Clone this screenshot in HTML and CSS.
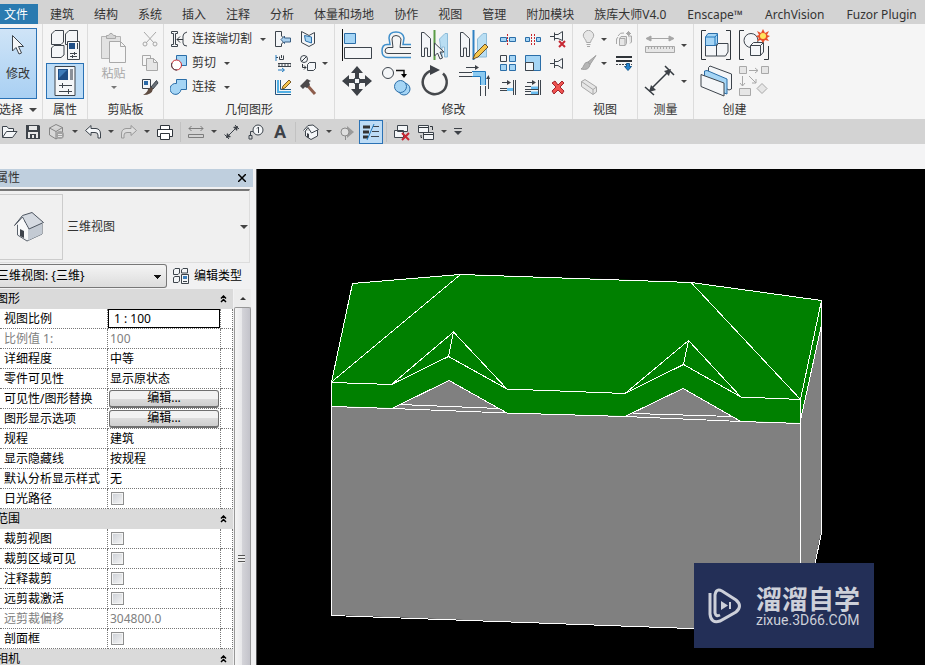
FILE: index.html
```html
<!DOCTYPE html>
<html lang="zh-CN">
<head>
<meta charset="utf-8">
<title>三维视图</title>
<link rel="stylesheet" href="styles.css">
</head>
<body>
<nav class="tabs">
  <a class="tab tab-file" href="#">文件</a>
  <a class="tab" href="#">建筑</a>
  <a class="tab" href="#">结构</a>
  <a class="tab" href="#">系统</a>
  <a class="tab" href="#">插入</a>
  <a class="tab" href="#">注释</a>
  <a class="tab" href="#">分析</a>
  <a class="tab" href="#">体量和场地</a>
  <a class="tab" href="#">协作</a>
  <a class="tab" href="#">视图</a>
  <a class="tab" href="#">管理</a>
  <a class="tab" href="#">附加模块</a>
  <a class="tab" href="#">族库大师V4.0</a>
  <a class="tab tab-addin" href="#">Enscape™</a>
  <a class="tab tab-addin" href="#">ArchVision</a>
  <a class="tab tab-addin" href="#">Fuzor Plugin</a>
</nav>

<div class="ribbon">
  <section class="panel panel-select">
    <div class="panel-body">
      <button class="modify">
        <svg width="14" height="22" viewBox="0 0 14 22"><path class="wh" d="M1.500 1.500V17L5 13.500L8 20L10.500 19L7.500 12.500H12.500Z"/></svg>
        <span>修改</span>
      </button>
    </div>
    <h2 class="panel-title">选择 <i class="caret caret-big"></i></h2>
  </section>

  <section class="panel panel-props">
    <div class="panel-body stack">
      <button class="big" aria-label="类型属性">
        <svg width="32" height="32" viewBox="0 0 32 32"><path class="wh" d="M2.500 5L6 1.500H14.500V13L12 15.500H2.500ZM16.500 5L20 1.500H28.500V13L26 15.500H16.500ZM2.500 19L5 16.500H15V26L12 28.500H2.500Z"/><path class="wh" d="M18.500 12.500H30.500V30.500H18.500Z"/><path fill="#1f4e86" d="M20 14H26V20H20Z"/><path class="ln" d="M28.500 14V20M21 24.500H28M21 27.500H28M25.500 23V26M23.500 26V29"/></svg>
      </button>
      <button class="big selected" aria-label="属性">
        <svg width="24" height="32" viewBox="0 0 24 32"><path class="wh" d="M2 1.500H22V30.500H2Z"/><path fill="#1f4e86" d="M5 4H15V15H5Z"/><path fill="#3f7cb9" d="M6 5H14L6 13Z"/><path fill="#8b9199" d="M17 4H20V15H17Z"/><path class="ln" d="M6 20.500H19M6 26.500H19M9.500 18V23M15.500 24V29"/></svg>
      </button>
    </div>
    <h2 class="panel-title">属性</h2>
  </section>

  <section class="panel panel-clip">
    <div class="panel-body split">
      <button class="paste" disabled>
        <svg width="28" height="32" viewBox="0 0 28 32"><path fill="#e2e2e2" stroke="#b4b4b4" d="M1.500 4.500H20.500V26.500H1.500Z"/><path fill="#d4d4d4" stroke="#a9a9a9" d="M6.500 6.500V3.500H8.500Q11 -1 13.500 3.500H15.500V6.500Z"/><path fill="#f6f6f6" stroke="#a9a9a9" d="M9.500 9.500H20.500L25.500 14.500V30.500H9.500ZM20.500 9.500V14.500H25.500"/></svg>
        <span>粘贴</span>
        <i class="caret"></i>
      </button>
      <div class="stack">
        <button class="small" aria-label="剪切"><svg width="18" height="18" viewBox="0 0 18 18"><path class="gy" d="M3 2L13 13M15 2L5 13"/><circle class="gy" cx="4" cy="14" r="2"/><circle class="gy" cx="14" cy="14" r="2"/></svg></button>
        <button class="small" aria-label="复制"><svg width="18" height="18" viewBox="0 0 18 18"><path class="gy" d="M5 11.500H1.500V1.500H9.500V4"/><path class="gyf" d="M5.500 4.500H12.500L16.500 8.500V16.500H5.500ZM12.500 4.500V8.500H16.500"/></svg></button>
        <button class="small" aria-label="匹配类型"><svg width="18" height="18" viewBox="0 0 18 18"><path class="wh" d="M1.500 1.500H9.500V10.500H1.500Z"/><path fill="#2a69a6" d="M3 3H7V7H3Z"/><path fill="#6b7178" stroke="#3d444c" d="M15.500 2.500L10 9L12 11L17 5Z"/><path fill="#604d42" d="M10 9L12 11Q11 17 2 17Q7 14 7 11Z"/></svg></button>
      </div>
    </div>
    <h2 class="panel-title">剪贴板</h2>
  </section>

  <section class="panel panel-geom">
    <div class="panel-body geom-grid">
      <button class="labelled"><svg width="18" height="18" viewBox="0 0 18 18"><path class="wh" d="M1.500 1.500H7.500V3.500H5.500V14.500H7.500V16.500H1.500V14.500H3.500V3.500H1.500Z"/><path class="lk" d="M7 9.500H13M10 6.500L7 9.500L10 12.500"/><path class="ln" d="M17 2Q13 3 13 6V13Q13 16 17 16"/></svg><span>连接端切割</span><i class="caret"></i></button>
      <button class="small" aria-label="墙连接"><svg width="18" height="18" viewBox="0 0 18 18"><path class="wh" d="M1.500 1.500H7.500V6L9.500 8M9.500 12L7.500 14V16.500H1.500V1.500"/><path fill="#a9d0ef" stroke="#3b5f83" d="M7 9.500L10.500 6V8H16.500V12H10.500V13.500Z"/></svg></button>
      <button class="small" aria-label="拆分面"><svg width="18" height="18" viewBox="0 0 18 18"><path class="wh" d="M2.500 1.500L10 5.500L15.500 2.500V13.500L10 16.500L2.500 12.500Z"/><path class="bl" d="M5.500 5.500L12.500 7V13L6.500 11Z"/></svg></button>
      <button class="labelled"><svg width="18" height="18" viewBox="0 0 18 18"><path class="bl" d="M6.500 1.500H16.500V11.500H6.500Z"/><circle cx="6.500" cy="11" r="5" fill="#fff" stroke="#c6282f"/><path class="ln" d="M2 9A5 5 0 0 0 7 16"/></svg><span>剪切</span><i class="caret"></i></button>
      <button class="small" aria-label="梁连接"><svg width="18" height="18" viewBox="0 0 18 18"><path class="ln" d="M5.500 2.500V5.500H9.500V1.500M7.500 1V4M2 3.500H4M4 9.500H17M4 12.500H17"/><path class="ln" stroke-dasharray="2 1" d="M4 11H17"/><path class="bs" d="M4 16H10M8 14L10.500 16L8 18M2 1V7"/></svg></button>
      <div class="pair"><button class="small" aria-label="填充"><svg width="18" height="18" viewBox="0 0 18 18"><circle class="wh" cx="5" cy="5" r="3.500"/><path class="lk" d="M2.500 7.500L7.500 2.500M3.500 10V13.500H7M5 11.500L7 13.500L5 15.500"/><path class="wh" d="M8.500 10.500L10.500 8.500H16.500V14.500L14.500 16.500H8.500Z"/></svg></button><i class="caret"></i></div>
      <button class="labelled"><svg width="18" height="18" viewBox="0 0 18 18"><path class="bl" d="M6.500 1.500H16.500V11.500H11A5.500 5.500 0 1 1 6.500 5.500Z"/></svg><span>连接</span><i class="caret"></i></button>
      <button class="small" aria-label="编辑"><svg width="18" height="18" viewBox="0 0 18 18"><path d="M1.500 2V16.500H17M6.500 2V11.500H17" fill="none" stroke="#24527c"/><path d="M4 2V14H17" fill="none" stroke="#52b0e5" stroke-width="2"/><path fill="#f5c34b" stroke="#7b5a22" d="M8 11L9 8L15 2L17 4L11 10Z"/></svg></button>
      <button class="small" aria-label="拆除"><svg width="18" height="18" viewBox="0 0 18 18"><path d="M8 7L16 16" stroke="#8d5d4c" stroke-width="3"/><path fill="#4d4a4c" d="M1 8L8 1L12 3L10 4L11 7L8 10L6 9L4 11Z"/></svg></button>
    </div>
    <h2 class="panel-title">几何图形</h2>
  </section>

  <section class="panel panel-modify">
    <div class="panel-body split">
      <div class="big-grid">
        <button class="big" aria-label="对齐"><svg width="32" height="32" viewBox="0 0 32 32"><path d="M1.500 0V32" stroke="#111"/><path class="bl" d="M3.500 4.500H14.500V14.500H3.500Z"/><path class="wh" d="M3.500 18.500H30.500V29.500H3.500Z"/></svg></button>
        <button class="big" aria-label="偏移"><svg width="32" height="32" viewBox="0 0 32 32"><path d="M31 15.500H23L24 9Q23 3 16 3Q9 3 9 9L10 15.500H7Q2 15.500 2 22Q2 28.500 8 28.500H31" fill="none" stroke="#3f8fcb" stroke-width="1.500"/><path class="ln" d="M31 18.500H20L21 10Q20 6.500 16 6.500Q12 6.500 12 10L13 18.500H8Q5 19 5 22Q5 24.500 8 24.500H31"/></svg></button>
        <button class="big" aria-label="镜像 - 拾取轴"><svg width="32" height="32" viewBox="0 0 32 32"><path class="wh" d="M2.500 27.500V3.500H5L11.500 9.500V27.500H8.500V19H5.500V27.500Z"/><path fill="#b9def3" stroke="#8dbbd8" d="M20.500 10L26 4.500H28.500V28H25.500V18H23V28Z"/><path d="M15.500 1V31" stroke="#5b9d45" stroke-width="2"/><path class="wh" d="M15.500 14V27L18.500 24L21 30L23.500 29L21 23H25Z"/></svg></button>
        <button class="big" aria-label="镜像 - 绘制轴"><svg width="32" height="32" viewBox="0 0 32 32"><path class="wh" d="M2.500 27.500V3.500H5L11.500 9.500V27.500H8.500V19H5.500V27.500Z"/><path fill="#b9def3" stroke="#8dbbd8" d="M19.500 10L25 4.500H28.500V28H19.500Z"/><path d="M15.500 1V31" stroke="#2f80c3" stroke-width="2"/><path fill="#f6c64c" stroke="#6c5028" d="M15 30L17 25L27 15L30 18L20 28Z"/></svg></button>
        <button class="big" aria-label="移动"><svg width="32" height="32" viewBox="0 0 32 32"><path class="dk" d="M16 1L22 8H18V13H14V8H10ZM16 31L22 24H18V19H14V24H10ZM1 16L8 10V14H13V18H8V22ZM31 16L24 10V14H19V18H24V22Z"/><path class="wh" d="M13.500 13.500H18.500V18.500H13.500Z"/></svg></button>
        <button class="big" aria-label="复制"><svg width="32" height="32" viewBox="0 0 32 32"><circle class="wh" cx="8" cy="8" r="5.500"/><path d="M16 5.500H24V11" fill="none" stroke="#111" stroke-width="1.500"/><path d="M21 9H27L24 13Z"/><circle class="bl" cx="24" cy="24" r="6"/><circle class="bl" cx="20.500" cy="21.500" r="6"/></svg></button>
        <button class="big" aria-label="旋转"><svg width="32" height="32" viewBox="0 0 32 32"><path d="M24 8.500A12 12 0 1 1 13 5.500" fill="none" stroke="#45484c" stroke-width="2.500"/><path class="dk" d="M11 0L21 5L11 10Z"/></svg></button>
        <button class="big" aria-label="修剪/延伸为角"><svg width="32" height="32" viewBox="0 0 32 32"><path d="M15 9H25V20" fill="none" stroke="#8ccaf0" stroke-width="4"/><path class="bs" d="M14 6.500H27.500V20M14 11.500H22.500V20"/><path class="ln" d="M1 7.500H14M1 11.500H14M22.500 21V31M27.500 21V31M8 2.500H18M30.500 12V24"/><path class="dk" d="M17 0L21 2.500L17 5ZM28 14L30.500 10L32 14Z"/></svg></button>
      </div>
      <div class="small-grid">
        <button class="small" aria-label="拆分图元"><svg width="18" height="18" viewBox="0 0 18 18"><path class="bl" d="M1.500 7.500H7.500V11.500H1.500ZM10.500 7.500H16.500V11.500H10.500Z"/><path class="rd" stroke-dasharray="2 1" d="M8.500 4V16"/></svg></button>
        <button class="small" aria-label="用间隙拆分"><svg width="18" height="18" viewBox="0 0 18 18"><path class="bl" d="M1.500 7.500H5.500V11.500H1.500ZM12.500 7.500H16.500V11.500H12.500Z"/><path class="rd" stroke-dasharray="2 1" d="M7.500 4V16M10.500 4V16"/></svg></button>
        <button class="small" aria-label="解锁"><svg width="18" height="18" viewBox="0 0 18 18"><path class="wh" d="M5.500 2.500V10.500M5.500 4.500H9L13.500 1.500V10.500L9 8.500H5.500"/><path class="ln" d="M1 6.500H5"/><path d="M10 11L16 17M16 11L10 17" stroke="#c62833" stroke-width="2"/></svg></button>
        <button class="small" aria-label="阵列"><svg width="18" height="18" viewBox="0 0 18 18"><path class="wh" d="M1.500 1.500H7.500V7.500H1.500Z"/><path class="bl" d="M10.500 1.500H16.500V7.500H10.500ZM1.500 10.500H7.500V16.500H1.500ZM10.500 10.500H16.500V16.500H10.500Z"/></svg></button>
        <button class="small" aria-label="缩放"><svg width="18" height="18" viewBox="0 0 18 18"><path class="bl" d="M1.500 1.500H16.500V16.500H1.500Z"/><path class="wh" d="M1.500 8.500H9.500V16.500H1.500Z"/></svg></button>
        <button class="small" aria-label="锁定"><svg width="18" height="18" viewBox="0 0 18 18"><path class="wh" d="M5.500 5V14M5.500 7.500H9L13.500 4.500V14.500L9 11.500H5.500"/><path class="ln" d="M1 9.500H5"/></svg></button>
        <button class="small" aria-label="修剪/延伸单个图元"><svg width="18" height="18" viewBox="0 0 18 18"><path d="M8 11.500H14" stroke="#6abdf0" stroke-width="3"/><path class="ln" d="M1 10.500H8M1 12.500H8M14.500 2V17M16.500 2V17M3 4.500H10"/><path class="dk" d="M8 2L12 4.500L8 7Z"/></svg></button>
        <button class="small" aria-label="修剪/延伸多个图元"><svg width="18" height="18" viewBox="0 0 18 18"><path d="M7 10H14M7 15H14" stroke="#6abdf0" stroke-width="3"/><path class="ln" d="M1 8.500H7M1 11.500H14M1 13.500H7M1 16.500H14M14.500 2V17M16.500 2V17M3 4.500H10"/><path class="dk" d="M8 2L12 4.500L8 7Z"/></svg></button>
        <button class="small" aria-label="删除"><svg width="18" height="18" viewBox="0 0 18 18"><path fill="#ef5350" stroke="#a3242c" d="M3 5L6 3L9 7L13 3L15 5L11 9L15 13L13 16L9 12L5 16L3 13L7 9Z"/></svg></button>
      </div>
    </div>
    <h2 class="panel-title">修改</h2>
  </section>

  <section class="panel panel-view">
    <div class="panel-body view-grid">
      <div class="pair"><button class="small" aria-label="隐藏"><svg width="18" height="18" viewBox="0 0 18 18"><path class="gyf" d="M6.500 12.500Q6 10 4.500 8.500A5 5 0 1 1 12.500 8.500Q11 10 10.500 12.500ZM6.500 14.500H10.500M7 16.500H10"/></svg></button><i class="caret"></i></div>
      <button class="small" aria-label="置换"><svg width="18" height="18" viewBox="0 0 18 18"><path class="gyf" d="M4.500 8.500L6 6.500H11.500V13.500L10 15.500H4.500ZM4.500 8.500H10V15.500M13 6H16.500V12L15 13.500M1.500 14V9L3 7"/><path class="gy" d="M3 6Q5 2 9 3M13.500 1V6M11 3.500H16M12 2L15 5M15 2L12 5"/></svg></button>
      <div class="pair"><button class="small" aria-label="替代"><svg width="18" height="18" viewBox="0 0 18 18"><path fill="#b5b5b5" stroke="#a0a0a0" d="M16 1.500L8 8L10 10.500ZM8 8Q5 8 4 11Q3 14 1 15Q9 17 10 10.500Z"/></svg></button><i class="caret"></i></div>
      <button class="small" aria-label="线处理"><svg width="18" height="18" viewBox="0 0 18 18"><path d="M1 3H17M1 7H17" stroke="#2e3338" stroke-width="2"/><path class="ln" stroke-dasharray="2 1" d="M1 10.500H17"/><path fill="#2685cf" stroke="#17598f" d="M11.500 9.500H14.500V12.500H16.500L13 16.500L9.500 12.500H11.500Z"/></svg></button>
      <button class="small" aria-label="剖面框"><svg width="18" height="18" viewBox="0 0 18 18"><path class="gyf" d="M1.500 3.500L5 1.500L16.500 9V14L13 16.500L1.500 8.500ZM1.500 3.500L13 11.500V16.500M13 11.500L16.500 9"/></svg></button>
    </div>
    <h2 class="panel-title">视图</h2>
  </section>

  <section class="panel panel-measure">
    <div class="panel-body stack">
      <div class="pair"><button class="big" aria-label="测量"><svg width="32" height="32" viewBox="0 0 32 32"><path d="M3 9.500H29M7 7V12L2 9.500ZM25 7V12L30 9.500Z" fill="#a6a6a6" stroke="#a6a6a6"/><path class="gyf" d="M1.500 17.500H30.500V23.500H1.500ZM4.500 17V20M7.500 17V20M10.500 17V20M13.500 17V20M16.500 17V20M19.500 17V20M22.500 17V20M25.500 17V20M28.500 17V20"/></svg></button><i class="caret"></i></div>
      <div class="pair"><button class="big" aria-label="对齐尺寸标注"><svg width="32" height="32" viewBox="0 0 32 32"><path d="M6 25L26 5M1 22L10 30M21 1L30 10" stroke="#343a40" stroke-width="1.500"/><path class="dk" d="M5 27L7 20L12 25ZM27 4L20 6L25 11Z"/></svg></button><i class="caret"></i></div>
    </div>
    <h2 class="panel-title">测量</h2>
  </section>

  <section class="panel panel-create">
    <div class="panel-body create-grid">
      <button class="big" aria-label="创建部件"><svg width="32" height="32" viewBox="0 0 32 32"><path class="lk" d="M6 1.500H1.500V30.500H6M26 1.500H30.500V30.500H26"/><path class="wh" d="M5.500 16H16.500V27H5.500ZM16.500 17L18 14.500H28V23L25.500 27H16.500Z"/><path class="bl" d="M5.500 8L8 4.500H17.500V14L15.500 16.500H5.500Z"/><path class="bs" d="M5.500 8H15V16M15 8L17.500 5"/></svg></button>
      <button class="big" aria-label="创建组"><svg width="32" height="32" viewBox="0 0 32 32"><path class="lk" d="M6 1.500H1.500V30.500H6M26 30.500H30.500V17"/><circle class="wh" cx="13" cy="11.500" r="7"/><path class="wh" d="M12.500 16.500L15.500 13.500H25.500V23L22.500 26.500H12.500ZM12.500 16.500H22.500V26.500M22.500 16.500L25.500 13.500"/><path fill="#e8502a" d="M25 0L27 4L31 2L29 6L32 7L29 9L31 12L27 11L25 14L23 11L19 12L21 9L18 7L21 6L19 2L23 4Z"/><circle cx="25" cy="7" r="3" fill="#ffe45e"/></svg></button>
      <button class="big" aria-label="创建平行"><svg width="32" height="32" viewBox="0 0 32 32"><path class="wh" d="M8.500 2.500L10 1L31.500 9V24L29 25L8.500 14Z"/><path class="bl" d="M4.500 10V6L7 5.500L27 14V29L24 28L4.500 18Z"/><path class="wh" d="M1 9.500L24 18V31L1 21.500Z"/></svg></button>
      <button class="big" aria-label="创建相似"><svg width="32" height="32" viewBox="0 0 32 32"><path class="gyf" d="M1.500 1.500H8.500V8.500H1.500ZM23.500 1.500H30.500V8.500H23.500ZM1.500 23.500H12.500V30.500H1.500ZM24 18.500L29 23.500L24 28.500L19 23.500Z"/><path class="gy" d="M11 5.500H20M17 3L20 5.500L17 8M4.500 11V21M2 18L4.500 21L7 18M11 11L18 18M14 18H18V14"/></svg></button>
    </div>
    <h2 class="panel-title">创建</h2>
  </section>
</div>

<div class="quick">
  <button class="q" aria-label="打开"><svg width="18" height="18" viewBox="0 0 18 18"><path class="wh" d="M2.500 14V3.500H7L8.500 5.500H13.500V8"/><path class="wh" d="M2.500 14.500L6.500 8.500H17L12.500 14.500Z"/></svg></button>
  <button class="q" aria-label="保存"><svg width="18" height="18" viewBox="0 0 18 18"><path fill="#3f444a" d="M2 2H15L16 3V16H2Z"/><path fill="#e8e8e8" d="M5 3H13V7H5ZM4 9H14V15H4Z"/><path fill="#3f444a" d="M6 11H12V16H6Z"/><path fill="#e8e8e8" d="M8 12H10V15H8Z"/></svg></button>
  <button class="q" aria-label="同步"><svg width="18" height="18" viewBox="0 0 18 18"><path fill="#d8d8d8" stroke="#858585" d="M1.500 5L8 1.500L14.500 4.500V12L8 16L1.500 12ZM1.500 5L8 8.500L14.500 4.500M8 8.500V16"/><circle cx="12" cy="12" r="4" fill="#a2a2a2"/><path stroke="#e5e5e5" d="M10 11.500H14M10 13.500H14"/></svg></button><i class="caret"></i>
  <button class="q" aria-label="放弃"><svg width="18" height="18" viewBox="0 0 18 18"><path class="wh" d="M1.500 7.500L7 2.500V5.500H12Q16.500 6 16.500 11V15H14V12Q14 9.500 11 9.500H7V12.500Z"/></svg></button><i class="caret"></i>
  <button class="q" aria-label="重做"><svg width="18" height="18" viewBox="0 0 18 18"><path fill="#ddd" stroke="#999" d="M16.500 7.500L11 2.500V5.500H6Q1.500 6 1.500 11V15H4V12Q4 9.500 7 9.500H11V12.500Z"/></svg></button><i class="caret"></i>
  <button class="q" aria-label="打印"><svg width="18" height="18" viewBox="0 0 18 18"><path class="lk" fill="#fff" d="M4.500 6V2.500H13.500V6M1.500 6.500H16.500V13.500H1.500Z"/><path class="lk" fill="#fff" d="M4.500 10.500H13.500V16.500H4.500Z"/></svg></button>
  <i class="sep"></i>
  <button class="q" aria-label="测量"><svg width="18" height="18" viewBox="0 0 18 18"><path class="gd" d="M2 5.500H16M4.500 3L2 5.500L4.500 8M13.500 3L16 5.500L13.500 8M1.500 11.500H16.500V14.500H1.500Z"/></svg></button><i class="caret"></i>
  <button class="q" aria-label="尺寸标注"><svg width="18" height="18" viewBox="0 0 18 18"><path class="ln" d="M4 14L14 4M1.500 11.500L6 16M12 2L16 6"/><path class="dk" d="M3 15L4 10L8 14ZM15 3L10 4L14 8Z"/></svg></button>
  <button class="q" aria-label="标记"><svg width="18" height="18" viewBox="0 0 18 18"><circle class="wh" cx="11" cy="7" r="5"/><path class="ln" d="M10 5.500L11.500 4V10M6 8.500H3.500V13M2 12.500H5V16H2Z"/></svg></button>
  <button class="q text-tool" aria-label="文字">A</button>
  <i class="sep"></i>
  <button class="q" aria-label="三维视图"><svg width="18" height="18" viewBox="0 0 18 18"><path class="wh" d="M3.500 8V13L9 16.500L15.500 13V7"/><path class="wh" d="M1.500 7.500L6 2.500L11 2L16.500 6.500L9.500 10L6 4.500L3 8.500"/><path class="dk" d="M5 10L7 11V15L5 14Z"/></svg></button><i class="caret"></i>
  <button class="q" aria-label="剖面"><svg width="18" height="18" viewBox="0 0 18 18"><path fill="#9a9a9a" d="M9 3L16 9L9 15Z"/><circle cx="7" cy="9" r="4" fill="#dedede" stroke="#8a8a8a"/><path stroke="#8a8a8a" d="M7.500 13V17"/></svg></button>
  <button class="q selected" aria-label="细线"><svg width="18" height="18" viewBox="0 0 18 18"><path d="M1 4H8M1 9H7M1 14H6" stroke="#333" stroke-width="3"/><path class="ln" d="M11 3.500H17M10 8.500H17M9 13.500H17"/><path class="bs" d="M12 1L5 17"/></svg></button>
  <i class="sep"></i>
  <button class="q" aria-label="关闭隐藏窗口"><svg width="18" height="18" viewBox="0 0 18 18"><path class="wh" d="M4.500 2.500H14.500V8.500H4.500ZM1.500 7.500H10.500V14.500H1.500Z"/><path d="M9 10L16 17M16 10L9 17" stroke="#c62833" stroke-width="2"/></svg></button>
  <button class="q" aria-label="切换窗口"><svg width="18" height="18" viewBox="0 0 18 18"><path class="wh" d="M1.500 2.500H11.500V9.500H1.500ZM6.500 9.500H16.500V16.500H6.500Z"/><path class="lk" d="M2 4.500H11M7 11.500H16M13 3.500H15.500V7M4 12V14.500H5"/></svg></button><i class="caret"></i>
  <button class="q q-last" aria-label="自定义"><svg width="10" height="10" viewBox="0 0 10 10"><path class="dk" d="M1 1H9V2H1ZM1 4H9L5 8Z"/></svg></button>
</div>

<main class="workspace">
  <aside class="palette">
    <header class="palette-head">
      <span>属性</span>
      <button class="close" aria-label="关闭"><svg width="8" height="8" viewBox="0 0 8 8"><path d="M0 0L8 8M8 0L0 8" stroke="#000" stroke-width="1.500"/></svg></button>
    </header>
    <button class="type-picker">
      <span class="thumb"><svg width="32" height="32" viewBox="0 0 32 32"><path fill="#eef0f3" stroke="#59616b" d="M4.500 14V24L14 30L29 23V13L17 8Z"/><path fill="#c3cad3" d="M15 18L29 12V23L15 29.500Z"/><path fill="#d5dae1" stroke="#4d5560" d="M1.500 14.500L9.500 4.500L19 1.500L30.500 11.500L16 18L9.500 6Z"/><path fill="#f8f9fa" d="M5 13L9.500 7L15 18V28L5 22Z"/><path fill="#3e444c" d="M7 18L11 20V27L7 25Z"/></svg></span>
      <span class="type-name">三维视图</span>
      <i class="caret caret-big"></i>
    </button>
    <div class="instance">
      <select aria-label="视图"><option>三维视图: {三维}</option></select>
      <button class="edit-type"><svg width="18" height="18" viewBox="0 0 18 18"><path class="wh" d="M1.500 3L3 1.500H7.500V6L6 7.500H1.500ZM9.500 3L11 1.500H15.500V6H9.500ZM1.500 10.500L3 9.500H7.500V14L6 15.500H1.500Z"/><path class="wh" d="M9.500 7.500H16.500V16.500H9.500Z"/><path fill="#3e80bd" d="M11 9H15V12H11Z"/><path class="ln" d="M11 14.500H15"/></svg><span>编辑类型</span></button>
    </div>
    <div class="props">
      <table>
        <colgroup><col class="c-name"><col class="c-value"><col class="c-link"></colgroup>
        <tbody>
          <tr class="group"><th colspan="3">图形<button class="fold" aria-label="折叠图形"><svg width="7" height="8" viewBox="0 0 7 8"><path d="M1 3.500L3.500 1L6 3.500M1 7L3.500 4.500L6 7"/></svg></button></th></tr>
          <tr><th><label for="scale">视图比例</label></th><td class="active"><input id="scale" type="text" value="1 : 100"></td><td></td></tr>
          <tr class="off"><th>比例值 1:</th><td>100</td><td></td></tr>
          <tr><th>详细程度</th><td>中等</td><td></td></tr>
          <tr><th>零件可见性</th><td>显示原状态</td><td></td></tr>
          <tr><th>可见性/图形替换</th><td class="cmd"><button>编辑...</button></td><td></td></tr>
          <tr><th>图形显示选项</th><td class="cmd"><button>编辑...</button></td><td></td></tr>
          <tr><th>规程</th><td>建筑</td><td></td></tr>
          <tr><th>显示隐藏线</th><td>按规程</td><td></td></tr>
          <tr><th>默认分析显示样式</th><td>无</td><td></td></tr>
          <tr><th><label for="sun">日光路径</label></th><td><input id="sun" type="checkbox"></td><td></td></tr>
          <tr class="group"><th colspan="3">范围<button class="fold" aria-label="折叠范围"><svg width="7" height="8" viewBox="0 0 7 8"><path d="M1 3.500L3.500 1L6 3.500M1 7L3.500 4.500L6 7"/></svg></button></th></tr>
          <tr><th><label for="crop">裁剪视图</label></th><td><input id="crop" type="checkbox"></td><td></td></tr>
          <tr><th><label for="cropvis">裁剪区域可见</label></th><td><input id="cropvis" type="checkbox"></td><td></td></tr>
          <tr><th><label for="anno">注释裁剪</label></th><td><input id="anno" type="checkbox"></td><td></td></tr>
          <tr><th><label for="far">远剪裁激活</label></th><td><input id="far" type="checkbox"></td><td></td></tr>
          <tr class="off"><th>远剪裁偏移</th><td>304800.0</td><td></td></tr>
          <tr><th><label for="box">剖面框</label></th><td><input id="box" type="checkbox"></td><td></td></tr>
          <tr class="group"><th colspan="3">相机<button class="fold" aria-label="折叠相机"><svg width="7" height="8" viewBox="0 0 7 8"><path d="M1 3.500L3.500 1L6 3.500M1 7L3.500 4.500L6 7"/></svg></button></th></tr>
        </tbody>
      </table>
      <div class="scroll">
        <span class="scroll-up"><i></i></span>
        <span class="scroll-thumb"><i></i></span>
      </div>
    </div>
  </aside>

  <section class="viewport">
    <svg class="model" viewBox="257 169 668 496" preserveAspectRatio="xMinYMin meet">
      <path fill="#808080" d="M331 382L449 370L683 370L800 399L821 320V533L800 633L331 615Z"/>
      <path fill="#008000" d="M331 382L352 283L460 274L691 282L821 300V325L800 423L741 421L683 388L625 416L507 413L449 380L392 408L331 406Z"/>
      <g class="edges">
        <path d="M331.500 615.500V382L352.500 283.500L460.500 274.500L691 282.500L821.500 300.500V533L800.500 632.500L331.500 615.500"/>
        <path d="M331.500 382.500L391.500 384.500L448.500 356.500L507 389L625 393.500L683.500 364.500L741 397L800.500 399.500L821.500 300.500"/>
        <path d="M331.500 406.500L392 408.500L449 380.500L507 413L625 416.500L683 388.500L741 421.500L800.500 423.500"/>
        <path d="M391.500 384.500L453.500 332L448.500 356.500M453.500 332L507 389M625 393.500L688.500 340.500L683.500 364.500M688.500 340.500L741 397"/>
        <path d="M331.500 382L460.500 274.500M691 282.500L800.500 399.500V632M821.500 325L801 418"/>
        <path d="M399 404.500L499 408.500M392 408.500L507 413M633 413.500L733 416.500M625 416.500L741 421.500"/>
      </g>
    </svg>
    <div class="brand">
      <svg width="34" height="36" viewBox="0 0 34 36"><path d="M2 5V26Q3 36 12 33L28 24Q35 18 28 12L14 3Q8 0 7 7V25Q8 29 12 27" fill="none" stroke="#cdd0d9" stroke-width="3"/><path d="M13 13L20 17.500L13 22ZM21 14H23V21H21Z" fill="#cdd0d9"/></svg>
      <div class="brand-text"><strong>溜溜自学</strong><span>zixue.3D66.COM</span></div>
    </div>
  </section>
</main>
</body>
</html>
```

FILE: styles.css
```css
* { box-sizing: border-box; }

html, body { height: 100%; }

body {
  margin: 0;
  display: flex;
  flex-direction: column;
  overflow: hidden;
  background: #f4f4f5;
  color: #333;
  font: 12px/20px "Noto Sans", "Noto Sans CJK SC", sans-serif;
}

button {
  display: flex;
  align-items: center;
  justify-content: center;
  margin: 0;
  padding: 0;
  border: 0;
  background: none;
  color: inherit;
  font: inherit;
}

svg { display: block; flex: none; }

/* Icon strokes and fills */
.ln { fill: none; stroke: #3d444c; }
.lk { stroke: #2f353b; }
path.lk:not([fill]) { fill: none; }
.wh { fill: #f4f6f8; stroke: #3d444c; }
.bl { fill: #a5d5f5; stroke: #2b6ea8; }
.bs { fill: none; stroke: #2079bd; }
.gy { fill: none; stroke: #a8a8a8; }
.gyf { fill: #e6e6e6; stroke: #a8a8a8; }
.gd { fill: none; stroke: #7d7d7d; }
.rd { fill: none; stroke: #c6282f; }
.dk { fill: #3d4147; }

.caret {
  flex: none;
  width: 0;
  height: 0;
  border: 3px solid transparent;
  border-top-color: #444;
  border-bottom: 0;
}
.caret-big { border-width: 4px 4px 0; }

/* Ribbon tabs */
.tabs {
  display: flex;
  flex: none;
  height: 24px;
  padding-top: 4px;
  background: #d3d3d3;
  white-space: nowrap;
}
.tab {
  padding: 0 10px;
  color: #333;
  line-height: 21px;
  text-decoration: none;
}
.tab-addin { padding: 0 11px; }
.tab-file {
  margin-right: 2px;
  padding-left: 4px;
  background: #2a7ab0;
  color: #fff;
}

/* Ribbon panels */
.ribbon {
  display: flex;
  flex: none;
  height: 95px;
  background: #f5f5f5;
}
.panel {
  display: flex;
  flex: none;
  flex-direction: column;
  padding-top: 3px;
  border-right: 1px solid #dcdcdc;
}
.panel-body { height: 72px; }
.panel-title {
  display: flex;
  align-items: center;
  justify-content: center;
  gap: 6px;
  margin: 0;
  font-size: 12px;
  font-weight: 400;
  line-height: 22px;
}
.panel-select { width: 43px; }
.panel-select .panel-title { justify-content: flex-start; margin-left: -1px; }
.panel-props { width: 45px; }
.panel-clip { width: 76px; }
.panel-geom { width: 171px; }
.panel-modify { width: 238px; }
.panel-view { width: 65px; }
.panel-measure { width: 56px; }
.panel-create { width: 81px; border-right: 0; }

.stack { display: flex; flex-direction: column; align-items: center; }
.split { display: flex; }
.pair { display: flex; align-items: center; }

.big { width: 38px; height: 36px; }
.small { width: 25px; height: 24px; }
.selected { border: 1px solid #2a72b5; background: #bddcf6; }

.modify {
  flex-direction: column;
  gap: 8px;
  width: 37px;
  height: 71px;
  margin-top: 1px;
  padding-bottom: 10px;
  border: 1px solid #2a72b5;
  border-left: 0;
  background: linear-gradient(#cfe4f7, #a9d0f3);
}

.paste {
  flex-direction: column;
  width: 49px;
  padding: 0 0 6px 2px;
  color: #a8a8a8;
}
.paste .caret { margin-top: 2px; border-top-color: #777; }

.geom-grid {
  display: grid;
  grid-template-columns: 103px 25px 1fr;
  grid-auto-rows: 24px;
  padding-left: 3px;
}
.labelled { justify-content: flex-start; gap: 4px; padding-left: 3px; white-space: nowrap; }
.labelled .caret { margin-left: 4px; }
.geom-grid .pair { gap: 2px; }

.big-grid {
  display: grid;
  grid-template-columns: repeat(4, 39px);
  grid-auto-rows: 36px;
  margin: 0 1px 0 3px;
}
.small-grid {
  display: grid;
  grid-template-columns: repeat(3, 25px);
  grid-auto-rows: 24px;
}
.view-grid {
  display: grid;
  grid-template-columns: 35px 25px;
  grid-auto-rows: 24px;
  padding-left: 3px;
}
.panel-measure .stack { padding-right: 4px; }
.panel-measure .pair { gap: 2px; }
.create-grid {
  display: grid;
  grid-template-columns: repeat(2, 38px);
  grid-auto-rows: 36px;
  padding-left: 3px;
}

/* Quick access toolbar */
.quick {
  display: flex;
  flex: none;
  align-items: center;
  height: 25px;
  margin-left: -3px;
  background: #d3d3d3;
}
.q { width: 24px; height: 24px; }
.q-last { width: 16px; }
.quick .caret { margin: 0 3px; }
.quick .sep { width: 1px; height: 20px; margin: 0 3px; background: #c2c2c2; }
.text-tool { font: bold 18px/24px Roboto, sans-serif; color: #3d4147; }

/* Workspace */
.workspace {
  display: flex;
  flex: 1;
  min-height: 0;
  padding-top: 25px;
}
.palette {
  display: flex;
  flex: none;
  flex-direction: column;
  width: 257px;
  padding-right: 4px;
  overflow: hidden;
  background: #f1f1f2;
}
.palette-head {
  display: flex;
  flex: none;
  align-items: center;
  justify-content: space-between;
  height: 18px;
  margin-bottom: 2px;
  padding-right: 7px;
  background: #bfcfde;
  text-indent: -4px;
}
.type-picker {
  flex: none;
  justify-content: flex-start;
  gap: 4px;
  height: 74px;
  margin-right: 3px;
  padding-right: 1px;
  border: 1px solid #ddd;
  border-top: 2px solid #777;
  border-left: 0;
  background: #f0f0f0;
}
.thumb {
  display: flex;
  align-items: center;
  justify-content: center;
  width: 63px;
  height: 66px;
  padding-right: 4px;
  border: 1px solid #ccc;
  border-left: 0;
}
.type-name { flex: 1; text-align: left; }

.instance {
  display: flex;
  flex: none;
  align-items: center;
  gap: 5px;
  height: 26px;
}
select {
  width: 167px;
  height: 24px;
  padding: 0 4px 0 0;
  border: 1px solid #777;
  border-left: 0;
  border-radius: 0 3px 3px 0;
  appearance: none;
  background: linear-gradient(135deg, #111 50%, transparent 50%) 158px 10px / 4px 4px no-repeat,
    linear-gradient(225deg, #111 50%, transparent 50%) 154px 10px / 4px 4px no-repeat,
    linear-gradient(#f4f4f4, #dcdcdc);
  color: #000;
  font: inherit;
  text-indent: -3px;
}
.edit-type { gap: 4px; color: #000; }

.props { display: flex; flex: 1; min-height: 0; overflow: hidden; }
table {
  flex: none;
  width: 233px;
  height: max-content;
  border-collapse: separate;
  border-spacing: 0;
  table-layout: fixed;
  background: #fff;
  color: #000;
}
.c-name { width: 108px; }
.c-value { width: 113px; }
.c-link { width: 12px; }
tr { height: 20px; }
th, td {
  height: 20px;
  padding: 0 0 0 2px;
  border-right: 1px dotted #777;
  border-bottom: 1px dotted #777;
  font-weight: 400;
  line-height: 19px;
  text-align: left;
  white-space: nowrap;
}
th { padding-left: 4px; }
.off { color: #808080; }
.group th {
  padding-left: 0;
  border-right: 0;
  border-bottom-color: #dadada;
  background: #dadada;
  text-indent: -4px;
}
.fold { float: right; width: 19px; height: 19px; }
.fold path { fill: none; stroke: #000; stroke-width: 1.5px; }
.active { padding: 0; }
input[type="text"] {
  display: block;
  width: 100%;
  height: 19px;
  padding: 0 5px;
  border: 1px solid #000;
  border-radius: 0;
  background: #fff;
  color: #000;
  font: inherit;
}
input[type="checkbox"] {
  display: block;
  width: 13px;
  height: 13px;
  margin: 0 1px;
  border: 1px solid #8e8f8f;
  appearance: none;
  background: linear-gradient(135deg, #cbcfd5, #f6f6f6);
  box-shadow: inset 0 0 0 1px #f4f4f4;
}
.cmd { padding: 0 1px; }
.cmd button {
  width: 110px;
  height: 18px;
  border: 1px solid #707070;
  border-bottom-width: 2px;
  border-radius: 3px;
  background: linear-gradient(#f2f2f2 50%, #dcdcdc 50%, #cfcfcf);
  line-height: 16px;
}

.scroll {
  display: flex;
  flex-direction: column;
  width: 17px;
  margin-left: 1px;
  background: #ececec;
}
.scroll-up { display: flex; flex: none; align-items: center; justify-content: center; height: 18px; }
.scroll-up i { border: 3px solid transparent; border-top: 0; border-bottom-color: #333; }
.scroll-thumb {
  display: flex;
  flex: 1;
  align-items: center;
  padding: 144px 0 0 3px;
  border: 1px solid #979797;
  border-bottom: 0;
  border-radius: 2px 2px 0 0;
  background: linear-gradient(90deg, #f5f5f5, #e8e8ea 45%, #d3d3d8 50%, #c3c3ca);
}
.scroll-thumb i {
  width: 7px;
  height: 8px;
  background: repeating-linear-gradient(#555 0 1px, #eee 1px 3px);
}

/* Drawing area */
.viewport {
  position: relative;
  flex: 1;
  min-width: 0;
  background: #000;
  box-shadow: -1px 0 #555;
}
.model { width: 100%; height: 100%; }
.edges { fill: none; stroke: #fff; shape-rendering: crispEdges; }
.brand {
  position: absolute;
  right: 51px;
  bottom: 17px;
  display: flex;
  align-items: center;
  gap: 14px;
  width: 180px;
  height: 85px;
  padding-left: 14px;
  background: #232f57;
  color: #cdd0d9;
}
.brand-text { display: flex; flex-direction: column; }
.brand-text strong { font: 700 26px/28px "Noto Sans CJK SC", sans-serif; }
.brand-text span { font: 14px/16px Roboto, sans-serif; }
```
